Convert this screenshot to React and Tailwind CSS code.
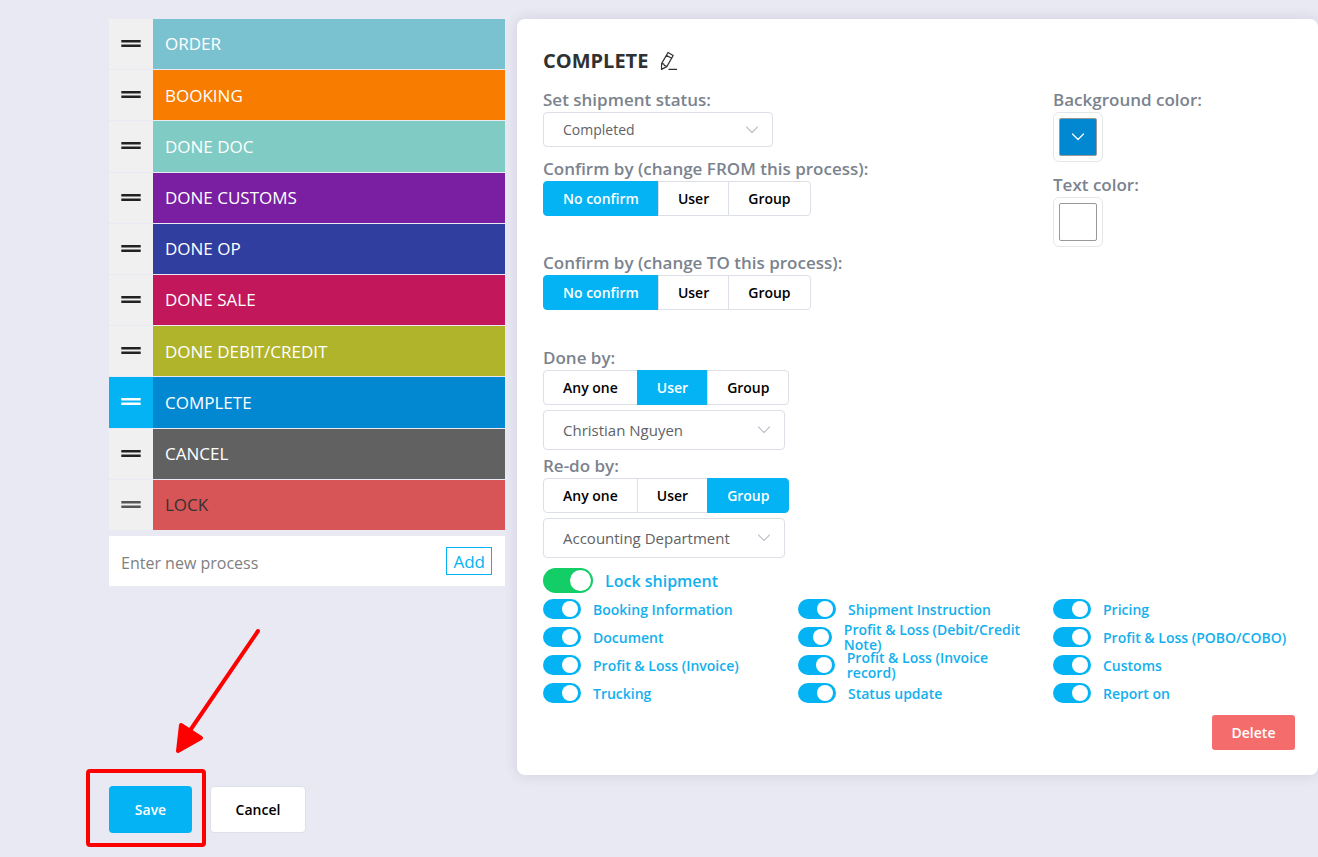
import { useState } from "react";

const PROCESSES = [
  { name: "ORDER", color: "bg-[#7bc2d0]" },
  { name: "BOOKING", color: "bg-[#f77c00]" },
  { name: "DONE DOC", color: "bg-[#80cbc4]" },
  { name: "DONE CUSTOMS", color: "bg-[#7a1fa2]" },
  { name: "DONE OP", color: "bg-[#303f9f]" },
  { name: "DONE SALE", color: "bg-[#c2185b]" },
  { name: "DONE DEBIT/CREDIT", color: "bg-[#afb42b]" },
  { name: "COMPLETE", color: "bg-[#0288d1]" },
  { name: "CANCEL", color: "bg-[#616161]" },
  { name: "LOCK", color: "bg-[#d75556]", locked: true },
];

const LOCK_ITEMS = [
  "Booking Information",
  "Shipment Instruction",
  "Pricing",
  "Document",
  "Profit & Loss (Debit/Credit Note)",
  "Profit & Loss (POBO/COBO)",
  "Profit & Loss (Invoice)",
  "Profit & Loss (Invoice record)",
  "Customs",
  "Trucking",
  "Status update",
  "Report on",
];

function Chevron({ className }) {
  return (
    <svg viewBox="0 0 14 14" className={className} fill="none" stroke="currentColor" strokeWidth="1.2" strokeLinecap="round" strokeLinejoin="round">
      <path d="M1.5 4 7 9.5 12.5 4" />
    </svg>
  );
}

function ProcessRow({ process, active, onSelect }) {
  return (
    <li className="flex min-h-0">
      <span className={`flex w-11 shrink-0 cursor-move items-center justify-center ${active ? "bg-[#03b3f3] text-white" : process.locked ? "bg-[#f0f0f0] text-[#555]" : "bg-[#f0f0f0] text-[#222]"}`}>
        <svg viewBox="0 0 20 8" className="h-2 w-5" fill="currentColor">
          <path d="M.3 0h19.4v2.6H.3zM.3 4.4h19.4V7H.3z" />
        </svg>
      </span>
      <button type="button" onClick={onSelect} className={`flex-1 cursor-pointer px-3 text-left text-[17px] ${process.color} ${process.locked ? "text-[#333]" : "text-white"}`}>
        {process.name}
      </button>
    </li>
  );
}

function Segmented({ legend, name, options, initial }) {
  const [value, setValue] = useState(initial);

  return (
    <fieldset>
      <legend className="text-[17px] leading-[25px] font-semibold text-[#7b838e]">{legend}</legend>
      <div className="flex">
        {options.map((option) => (
          <label
            key={option}
            className={`-ml-px flex h-[35px] cursor-pointer items-center border px-[19px] text-sm font-semibold first:ml-0 first:rounded-l last:rounded-r ${value === option ? "border-[#03b3f3] bg-[#03b3f3] text-white" : "border-[#dcdfe6] bg-white text-black"}`}
          >
            <input type="radio" name={name} checked={value === option} onChange={() => setValue(option)} className="sr-only" />
            {option}
          </label>
        ))}
      </div>
    </fieldset>
  );
}

function Select({ options, className, ...props }) {
  return (
    <div className={`relative ${className}`}>
      <select {...props} className="h-full w-full appearance-none rounded border border-[#dcdfe6] bg-white px-[19px] text-[#606266] outline-none">
        {options.map((option) => (
          <option key={option}>{option}</option>
        ))}
      </select>
      <Chevron className="pointer-events-none absolute top-1/2 right-[14px] size-[14px] -translate-y-1/2 text-[#c0c4cc]" />
    </div>
  );
}

function ColorButton({ label, id, color, children }) {
  return (
    <div>
      <label htmlFor={id} className="block text-[17px] leading-[25px] font-semibold text-[#7b838e]">{label}</label>
      <button id={id} type="button" className="size-[50px] cursor-pointer rounded-md border border-[#e6e6e6] p-[5px]">
        <span className={`flex size-full items-center justify-center rounded-xs border border-[#999] ${color}`}>{children}</span>
      </button>
    </div>
  );
}

function LockToggle({ label }) {
  return (
    <label className="flex h-7 cursor-pointer items-center gap-3 pr-5 text-sm leading-[15px] font-semibold text-[#12b0ee]">
      <input
        type="checkbox"
        defaultChecked
        className="flex h-5 w-[38px] min-w-0 appearance-none items-center rounded-full bg-[#c0ccda] px-[3px] before:size-4 before:shrink-0 before:rounded-full before:bg-white checked:justify-end checked:bg-[#03b3f3]"
      />
      <span>{label}</span>
    </label>
  );
}

export default function App() {
  const [selected, setSelected] = useState("COMPLETE");
  const [newProcess, setNewProcess] = useState("");

  return (
    <div className="relative min-h-screen overflow-hidden bg-[#e9e9f3] pt-[19px] pl-[109px] font-['Open_Sans',sans-serif]">
      <div className="flex items-start gap-3">
        {/* Process list */}
        <div className="w-[396px] shrink-0">
          <ul className="grid h-[511px] auto-rows-fr gap-px">
            {PROCESSES.map((process) => (
              <ProcessRow key={process.name} process={process} active={selected === process.name} onSelect={() => setSelected(process.name)} />
            ))}
          </ul>
          <form onSubmit={(e) => e.preventDefault()} className="mt-[6px] flex h-[50px] items-center bg-white pr-[13px] pl-3">
            <input
              type="text"
              aria-label="New process"
              placeholder="Enter new process"
              value={newProcess}
              onChange={(e) => setNewProcess(e.target.value)}
              className="min-w-0 flex-1 pt-[3px] text-base outline-none placeholder:text-[#808080]"
            />
            <button type="submit" className="h-7 cursor-pointer border border-[#03b3f3] px-[6px] text-[17px] leading-none text-[#03b3f3]">Add</button>
          </form>
        </div>

        {/* Process settings */}
        <section className="min-w-0 flex-1 rounded-lg bg-white pt-[26px] pr-[10px] pb-[25px] pl-[26px] shadow-[0_0_14px_rgba(60,60,110,0.14)]">
          <div className="flex h-8 items-center gap-3">
            <h2 className="text-xl font-bold text-[#303133]">{selected}</h2>
            <button type="button" aria-label="Rename process" className="cursor-pointer text-[#303133]">
              <svg viewBox="0 0 18 20" className="h-5 w-[18px]" fill="none" stroke="currentColor" strokeWidth="1.2" strokeLinejoin="round">
                <path d="M8 1.5 13.2 4.5 6.8 15.6 1.5 18.4 1.6 12.6zM6.4 4.3l5.2 3M1.6 12.6l2 .2.8 1.6 2.4 1.2M8.5 18.4H17" />
              </svg>
            </button>
          </div>

          <div className="mt-[10px] grid grid-cols-3">
            <div className="col-span-2">
              <label htmlFor="status" className="block text-[17px] leading-[25px] font-semibold text-[#7b838e]">Set shipment status:</label>
              <Select id="status" options={["Completed", "Processing"]} className="mb-[9px] h-[35px] w-[230px] text-sm" />
              <Segmented name="from" legend="Confirm by (change FROM this process):" options={["No confirm", "User", "Group"]} initial="No confirm" />
              <div className="mt-[34px]">
                <Segmented name="to" legend="Confirm by (change TO this process):" options={["No confirm", "User", "Group"]} initial="No confirm" />
              </div>
              <div className="mt-[35px]">
                <Segmented name="done" legend="Done by:" options={["Any one", "User", "Group"]} initial="User" />
              </div>
              <Select aria-label="Done by user" options={["Christian Nguyen"]} className="mt-[5px] mb-[3px] h-10 w-[242px] text-[15px]" />
              <Segmented name="redo" legend="Re-do by:" options={["Any one", "User", "Group"]} initial="Group" />
              <Select aria-label="Re-do by group" options={["Accounting Department"]} className="mt-[5px] h-10 w-[242px] text-[15px]" />
            </div>
            <div className="flex flex-col gap-[10px]">
              <ColorButton id="bg-color" label="Background color:" color="bg-[#0288d1]">
                <Chevron className="size-[14px] text-white" />
              </ColorButton>
              <ColorButton id="text-color" label="Text color:" color="bg-white" />
            </div>
          </div>

          <label className="mt-[10px] flex h-[25px] w-fit cursor-pointer items-center gap-3 text-base font-semibold text-[#12b0ee]">
            <input
              type="checkbox"
              defaultChecked
              className="flex h-[25px] w-[50px] shrink-0 appearance-none items-center rounded-full bg-[#c0ccda] px-[2px] before:size-[21px] before:rounded-full before:bg-white checked:justify-end checked:bg-[#13ce66]"
            />
            Lock shipment
          </label>
          <div className="mt-[2px] grid grid-cols-3">
            {LOCK_ITEMS.map((item) => (
              <LockToggle key={item} label={item} />
            ))}
          </div>

          <div className="mt-2 mr-[13px] flex justify-end">
            <button type="button" className="h-[35px] w-[83px] cursor-pointer rounded-[3px] bg-[#f56c6c] text-sm font-semibold text-white">Delete</button>
          </div>
        </section>
      </div>

      <div className="mt-[11px] mb-6 flex gap-[18px]">
        <div className="relative">
          <button type="button" className="h-[47px] w-[83px] cursor-pointer rounded bg-[#03b3f3] text-sm font-semibold text-white">Save</button>
          {/* Callout frame and arrow */}
          <div className="pointer-events-none absolute -top-[17px] -left-[23px] h-[78px] w-[120px] rounded-[4px] border-4 border-[#fe0000]" />
          <svg viewBox="0 0 90 130" className="pointer-events-none absolute bottom-[77px] left-[64px] h-[130px] w-[90px]" fill="#fe0000" stroke="#fe0000" strokeLinejoin="round" strokeLinecap="round">
            <path d="M85 5 16 106" strokeWidth="4" />
            <path d="M8 99 28 112 5 125z" strokeWidth="4" />
          </svg>
        </div>
        <button type="button" className="h-[47px] w-24 cursor-pointer rounded border border-[#dcdfe6] bg-white text-sm font-semibold text-black">Cancel</button>
      </div>
    </div>
  );
}
